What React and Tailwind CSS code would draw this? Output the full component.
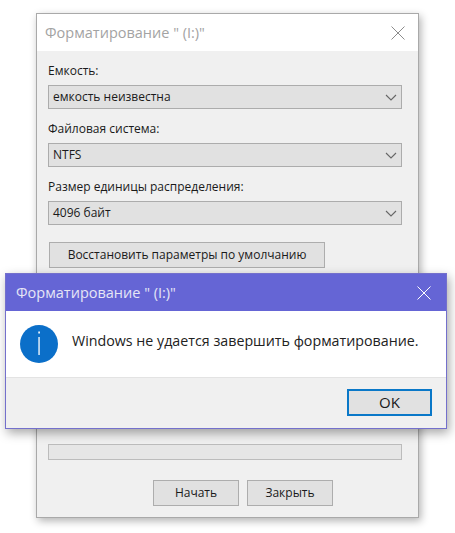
const fields = [
  { label: 'Емкость:', value: 'емкость неизвестна' },
  { label: 'Файловая система:', value: 'NTFS' },
  { label: 'Размер единицы распределения:', value: '4096 байт' },
];

function Chevron() {
  return (
    <svg width="12" height="7" viewBox="0 0 12 7" fill="none" stroke="#666666" strokeWidth="1.1">
      <path d="M1 1l5 5 5-5" />
    </svg>
  );
}

function Cross({ color, size }) {
  return (
    <svg width={size} height={size} viewBox="0 0 14 14" fill="none" stroke={color} strokeWidth="1">
      <path d="M0.5 0.5l13 13M13.5 0.5l-13 13" />
    </svg>
  );
}

export default function App() {
  return (
    <div className="relative w-[455px] h-[533px] bg-white overflow-hidden font-['Open_Sans','Noto_Sans',sans-serif] text-[12px] text-[#1a1a1a]">
      {/* Format window */}
      <div className="ml-[36px] mt-[13px] w-[383px] h-[505px] bg-[#f0f0f0] border border-[#a9a9a9] shadow-[2px_3px_8px_rgba(0,0,0,0.3)] flex flex-col">
        <div className="h-[37px] bg-white flex items-center justify-between pl-[8px] pr-[13px] shrink-0">
          <span className="text-[14.5px] text-[#a3a3a3]">Форматирование " (I:)"</span>
          <Cross color="#8c8c8c" size={14} />
        </div>

        <div className="pl-[11px] pr-[16px] pt-[11px] flex flex-col flex-1">
          {fields.map((f) => (
            <div key={f.label} className="mb-[11px]">
              <div className="h-[23px] leading-[18px]">{f.label}</div>
              <div className="h-[24px] bg-[#e1e1e1] border border-[#acacac] flex items-center justify-between pl-[4px] pr-[4px]">
                <span>{f.value}</span>
                <Chevron />
              </div>
            </div>
          ))}

          <button className="ml-[1px] mt-[6px] w-[276px] h-[26px] bg-[#e1e1e1] border border-[#adadad] text-center">
            Восстановить параметры по умолчанию
          </button>

          <div className="mt-[176px] h-[16px] bg-[#e6e6e6] border border-[#bcbcbc]"></div>

          <div className="mt-[20px] ml-[105px] flex gap-[8px]">
            <button className="w-[86px] h-[26px] bg-[#e1e1e1] border border-[#adadad]">Начать</button>
            <button className="w-[86px] h-[26px] bg-[#e1e1e1] border border-[#adadad]">Закрыть</button>
          </div>
        </div>
      </div>

      {/* Error message dialog */}
      <div className="absolute left-[5px] top-[273px] w-[442px] h-[156px] bg-[#f0f0f0] border border-[#7470cc] shadow-[2px_4px_10px_rgba(0,0,0,0.35)] flex flex-col">
        <div className="h-[37px] bg-[#6565d5] flex items-center justify-between pl-[10px] pr-[15px] shrink-0">
          <span className="text-[14.5px] text-[#e6e6f5]">Форматирование " (I:)"</span>
          <Cross color="#ffffff" size={14} />
        </div>
        <div className="h-[67px] bg-white border-b border-[#e3e3e3] flex items-start pl-[14px] pt-[14px] shrink-0">
          <svg width="38" height="38" viewBox="0 0 38 38" className="shrink-0">
            <circle cx="19" cy="19" r="19" fill="#0b6fc9" />
            <rect x="18.3" y="6.5" width="1.6" height="2" fill="#ffffff" />
            <rect x="18.4" y="12" width="1.3" height="18" fill="#ffffff" />
          </svg>
          <span className="ml-[14px] mt-[6px] text-[14.25px] leading-[20px] text-[#222]">Windows не удается завершить форматирование.</span>
        </div>
        <div className="flex-1 flex justify-end pt-[11px] pr-[14px]">
          <button className="w-[85px] h-[27px] bg-[#e1e1e1] border-2 border-[#0a78c8] text-[15px]">OK</button>
        </div>
      </div>
    </div>
  );
}
